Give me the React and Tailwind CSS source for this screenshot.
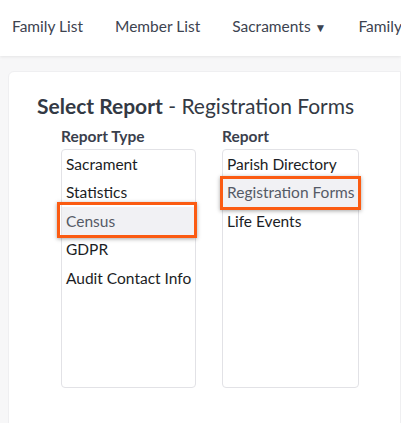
import React from 'react';

const reportTypes = ['Sacrament', 'Statistics', 'Census', 'GDPR', 'Audit Contact Info'];
const reports = ['Parish Directory', 'Registration Forms', 'Life Events'];

const ListBox = ({items, selected, width, hl}) => (
    <div className={`relative h-[239px] ${width} rounded border border-[#e2e2e6] bg-white`}>
        {items.map((item) => (
            <div
                key={item}
                className={`h-[28.5px] px-[4px] flex items-center whitespace-nowrap ${item === selected ? 'bg-[#f1f1f4] text-[#555a66]' : 'text-[#1b1d24]'}`}>
                {item}
            </div>
        ))}
        {/* orange annotation box */}
        <div className={`absolute ${hl} border-[3px] border-[#fb5b12] shadow-[0_1px_4px_rgba(0,0,0,0.35)] pointer-events-none`}/>
    </div>
);

const App = () => {
    return (
        <div className="w-[401px] h-[423px] overflow-hidden bg-[#f7f7f8] text-[15.5px]" style={{fontFamily: 'Lato, "Open Sans", sans-serif'}}>
            <div className="h-[56px] pb-[2px] bg-white flex items-center gap-[32px] pl-[12px] text-[#3d4350] whitespace-nowrap shadow-[0_1px_3px_rgba(0,0,0,0.08)]">
                <span>Family List</span>
                <span>Member List</span>
                <span>Sacraments <span className="text-[12px]">▼</span></span>
                <span>Family</span>
            </div>

            <div className="ml-[8px] mt-[15px] h-[400px] bg-white rounded-tl-md border border-[#efeff1] pl-[28px] pt-[20px]">
                <h1 className="text-[21px] text-[#333944] leading-[28px]">
                    <span className="font-bold">Select Report</span> - Registration Forms
                </h1>
                <div className="flex gap-[26px] pl-[24px] mt-[6px]">
                    <div>
                        <div className="font-bold text-[#3a404c] leading-[20px] mb-[3px]">Report Type</div>
                        <ListBox items={reportTypes} selected="Census" width="w-[135px]" hl="left-[-5px] top-[52px] w-[140px] h-[36px]"/>
                    </div>
                    <div>
                        <div className="font-bold text-[#3a404c] leading-[20px] mb-[3px]">Report</div>
                        <ListBox items={reports} selected="Registration Forms" width="w-[137px]" hl="left-[-3px] top-[26px] w-[141px] h-[34px]"/>
                    </div>
                </div>
            </div>
        </div>
    );
};

export default App;
